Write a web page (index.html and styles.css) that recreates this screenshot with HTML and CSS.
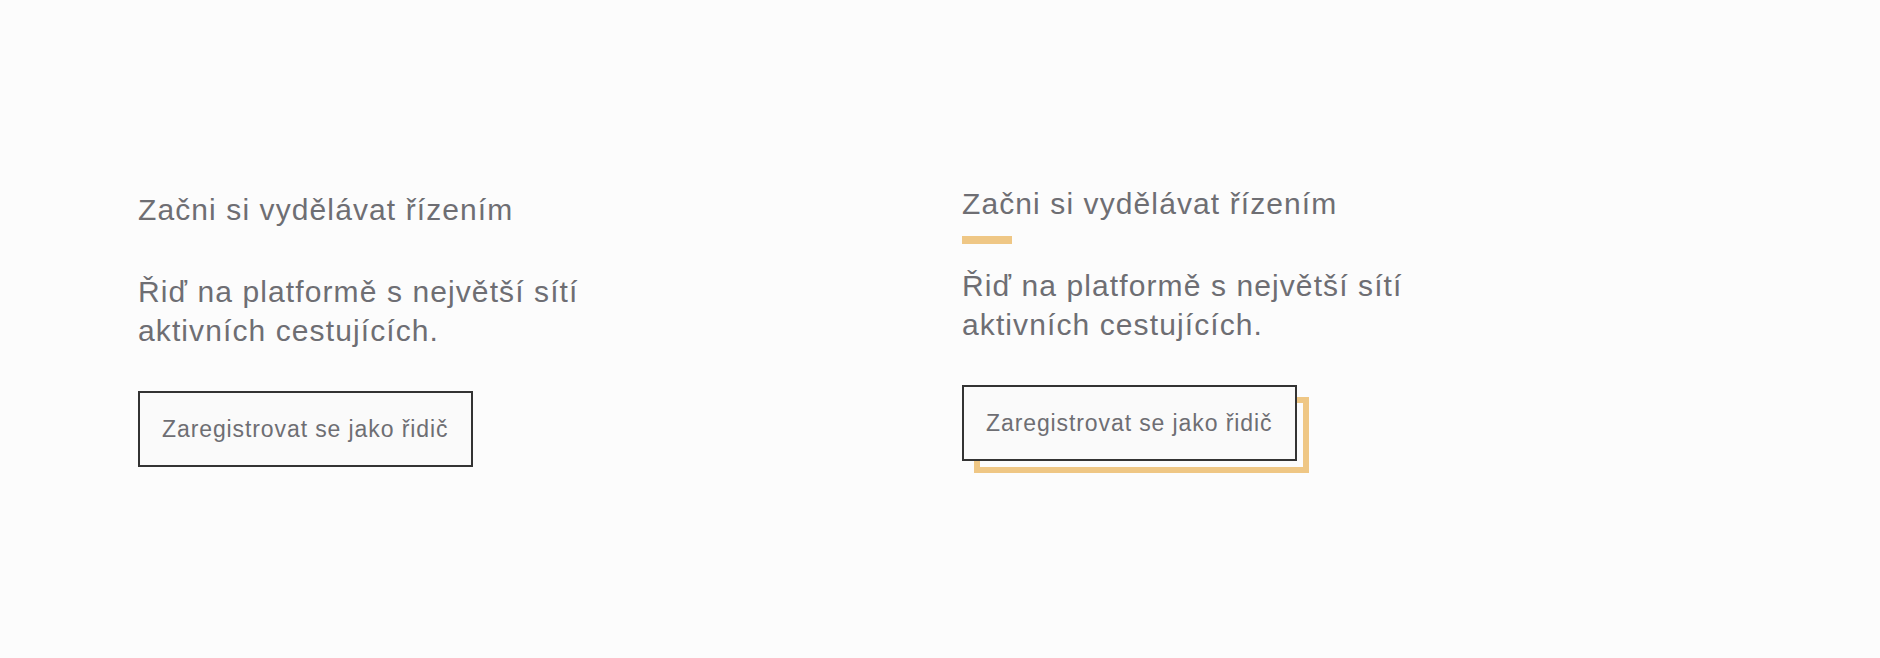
FILE: index.html
```html
<!DOCTYPE html>
<html lang="cs">
<head>
  <meta charset="UTF-8" />
  <meta name="viewport" content="width=device-width, initial-scale=1.0"/>
  <title>Zaregistrovat se jako řidič</title>
  <link rel="stylesheet" href="styles.css">
</head>
<body>
  <div class="cards">
    <div class="card">
      <h2 class="card-title">Začni si vydělávat řízením</h2>
      <p class="card-text">Řiď na platformě s největší sítí aktivních cestujících.</p>
      <span class="button-wrap">
        <a class="button" href="#">Zaregistrovat se jako řidič</a>
      </span>
    </div>

    <div class="card card-active">
      <h2 class="card-title">Začni si vydělávat řízením</h2>
      <p class="card-text">Řiď na platformě s největší sítí aktivních cestujících.</p>
      <span class="button-wrap">
        <a class="button" href="#">Zaregistrovat se jako řidič</a>
      </span>
    </div>
  </div>
</body>
</html>
```

FILE: styles.css
```css
body {
  font-family: "Liberation Sans", Arial, sans-serif;
  background-color: #fcfcfc;
  color: #6e6e73;
  margin: 0;
}

.cards {
  display: grid;
  grid-template-columns: 824px 824px;
  align-items: start;
  padding: 190px 0 40px 138px;
}

.card {
  display: flex;
  flex-direction: column;
  align-items: flex-start;
  padding-bottom: 20px;
}

.card-title {
  position: relative;
  margin: 0;
  font-size: 30px;
  font-weight: normal;
  line-height: 40px;
  letter-spacing: 1.1px;
}

.card-text {
  max-width: 470px;
  margin: 42px 0 0;
  font-size: 30px;
  line-height: 39px;
  letter-spacing: 1.1px;
}

.button-wrap {
  position: relative;
  display: block;
  margin-top: 41px;
}

.button {
  position: relative;
  z-index: 1;
  display: block;
  padding: 0 23px 0 22px;
  height: 72px;
  line-height: 72px;
  border: 2px solid #333;
  background-color: #fafafa;
  color: #6e6e73;
  font-size: 23px;
  letter-spacing: 0.9px;
  text-decoration: none;
}

.card-active {
  margin-top: -6px;
}

.card-active .card-title::after {
  content: "";
  position: absolute;
  left: 0;
  bottom: -20px;
  width: 50px;
  height: 8px;
  background-color: #efc785;
}

.card-active .button-wrap::before {
  content: "";
  position: absolute;
  left: 12px;
  top: 12px;
  box-sizing: border-box;
  width: 100%;
  height: 100%;
  border: 6px solid #efc785;
}
```
